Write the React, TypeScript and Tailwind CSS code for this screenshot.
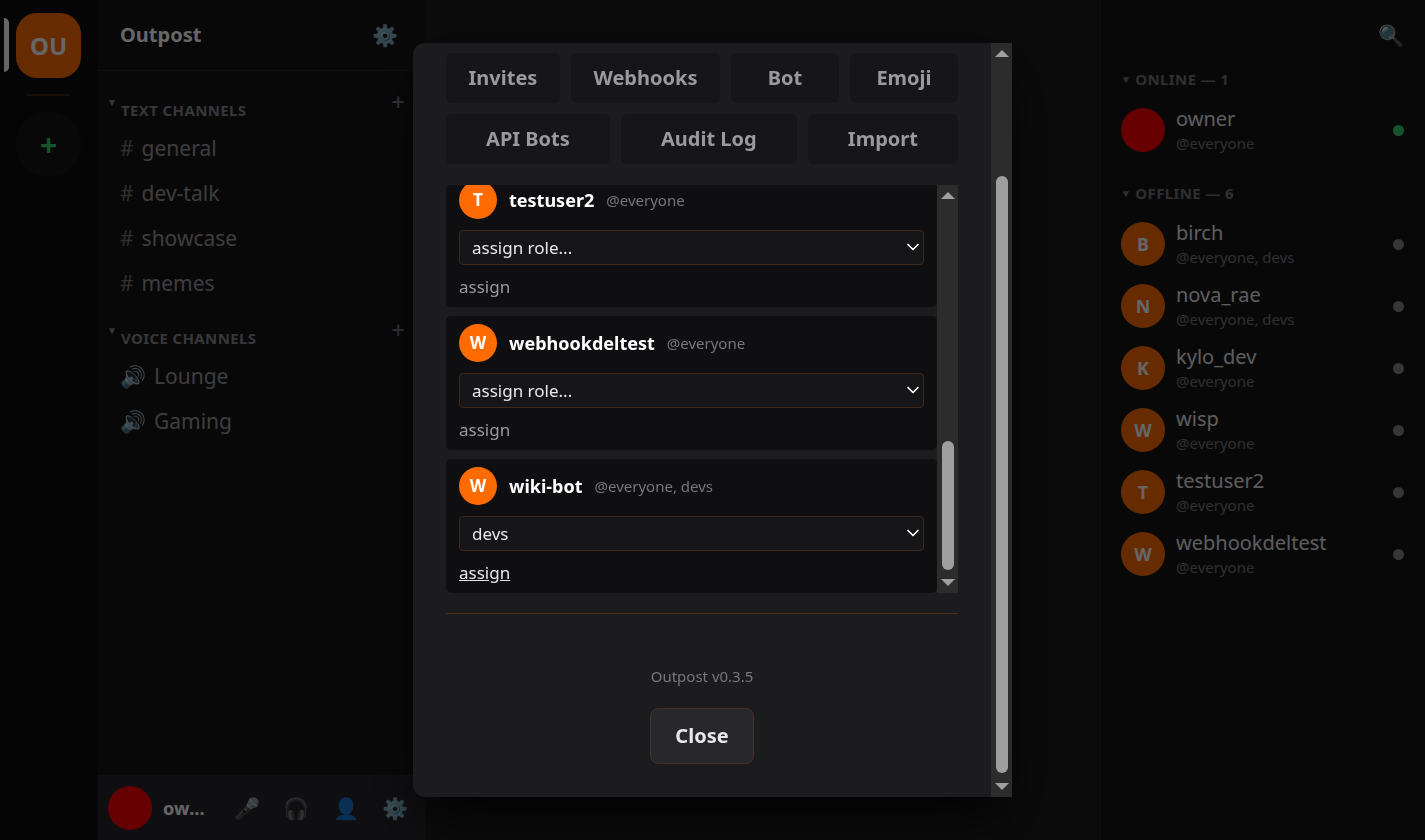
import { ChevronDown } from "lucide-react";

const textChannels = ["general", "dev-talk", "showcase", "memes"];
const voiceChannels = ["Lounge", "Gaming"];

const settingsTabs = ["Invites", "Webhooks", "Bot", "Emoji", "API Bots", "Audit Log", "Import"];

interface Member {
  name: string;
  roles: string;
  initial?: string;
  online?: boolean;
}

const onlineMembers: Member[] = [{ name: "owner", roles: "@everyone", online: true }];

const offlineMembers: Member[] = [
  { name: "birch", roles: "@everyone, devs", initial: "B" },
  { name: "nova_rae", roles: "@everyone, devs", initial: "N" },
  { name: "kylo_dev", roles: "@everyone", initial: "K" },
  { name: "wisp", roles: "@everyone", initial: "W" },
  { name: "testuser2", roles: "@everyone", initial: "T" },
  { name: "webhookdeltest", roles: "@everyone", initial: "W" },
];

const roleCards = [
  { name: "testuser2", roles: "@everyone", initial: "T", role: "" },
  { name: "webhookdeltest", roles: "@everyone", initial: "W", role: "" },
  { name: "wiki-bot", roles: "@everyone, devs", initial: "W", role: "devs", active: true },
];

function ServerRail() {
  return (
    <nav className="flex w-[98px] shrink-0 flex-col items-center border-r border-[#161618] bg-[#0e0e10] pt-[13px]">
      <div className="relative flex w-full justify-center">
        <span className="absolute left-1 top-[5px] h-[54px] w-[5px] rounded-r-md bg-white" />
        <button className="h-[65px] w-[65px] rounded-[21px] bg-[#ff6b00] text-2xl font-bold text-white">
          OU
        </button>
      </div>
      <div className="mt-4 h-[2px] w-[43px] bg-[#3a2418]" />
      <button
        aria-label="Add server"
        className="mt-4 h-[65px] w-[65px] rounded-full bg-[#161618] text-3xl font-bold text-[#3ecf76]"
      >
        +
      </button>
    </nav>
  );
}

function ChannelHeading({ label }: { label: string }) {
  return (
    <div className="flex h-12 items-center pl-[9px] pr-5 text-[#8a8a8e]">
      <span className="w-[14px] text-[10px]">▼</span>
      <h2 className="flex-1 pt-4 text-[15px] font-bold tracking-wide">{label}</h2>
      <button aria-label={`Add to ${label}`} className="text-2xl leading-6">
        +
      </button>
    </div>
  );
}

function UserPanel() {
  return (
    <div className="flex h-[65px] items-center bg-[#26262b] px-[10px]">
      <span className="h-11 w-11 shrink-0 rounded-full bg-[#ff0000]" />
      <span className="ml-[11px] w-[50px] truncate text-lg font-bold text-white">owner</span>
      <div className="flex flex-1 justify-between pl-[21px] pr-[7px] text-[21px] leading-6">
        <button aria-label="Mute">🎤</button>
        <button aria-label="Deafen">🎧</button>
        <button aria-label="Profile">👤</button>
        <button aria-label="Settings">⚙️</button>
      </div>
    </div>
  );
}

function ChannelSidebar() {
  return (
    <aside className="flex w-[327px] shrink-0 flex-col bg-[#161618]">
      <header className="flex h-[71px] items-center justify-between border-b border-[#26262b] pl-[22px] pr-[27px]">
        <h1 className="text-xl font-bold text-white">Outpost</h1>
        <button aria-label="Server settings" className="text-[21px] leading-6">
          ⚙️
        </button>
      </header>
      <div className="flex-1 pt-[7px] text-[21px] text-[#9a9a9e]">
        <ChannelHeading label="TEXT CHANNELS" />
        {textChannels.map((name) => (
          <a key={name} href="#" className="flex h-[45px] items-center gap-2 px-[22px]">
            <span className="text-[#77777b]">#</span>
            {name}
          </a>
        ))}
        <ChannelHeading label="VOICE CHANNELS" />
        {voiceChannels.map((name) => (
          <a key={name} href="#" className="flex h-[45px] items-center gap-2 px-[22px]">
            <span>🔊</span>
            {name}
          </a>
        ))}
      </div>
      <UserPanel />
    </aside>
  );
}

function MemberGroup({ label, members }: { label: string; members: Member[] }) {
  return (
    <section className="pt-5">
      <h2 className="flex h-8 items-start gap-1 text-[15px] font-bold leading-6 tracking-wide text-[#77777b]">
        <span className="text-[10px] leading-6">▼</span>
        {label}
      </h2>
      {members.map((m) => (
        <div key={m.name} className="flex h-[62px] items-center">
          <span
            className={`flex h-11 w-11 items-center justify-center rounded-full text-lg font-bold text-white ${
              m.initial ? "bg-[#ff6b00]" : "bg-[#ff0000]"
            }`}
          >
            {m.initial}
          </span>
          <div className="ml-[11px] min-w-0 flex-1">
            <div className="truncate text-xl leading-[26px] text-[#e8e8ea]">{m.name}</div>
            <div className="truncate text-[15px] leading-[22px] text-[#77777b]">{m.roles}</div>
          </div>
          <span className={`h-[11px] w-[11px] rounded-full ${m.online ? "bg-[#3ecf76]" : "bg-[#88888c]"}`} />
        </div>
      ))}
    </section>
  );
}

function MemberList() {
  return (
    <aside className="w-[325px] shrink-0 border-l border-[#26262b] bg-[#161618] pl-5 pr-[21px]">
      <div className="flex h-[47px] items-end justify-end">
        <button aria-label="Search" className="text-[21px] leading-6">
          🔍
        </button>
      </div>
      <MemberGroup label="ONLINE — 1" members={onlineMembers} />
      <MemberGroup label="OFFLINE — 6" members={offlineMembers} />
    </aside>
  );
}

function ScrollTrack({ children }: { children: React.ReactNode }) {
  return (
    <div className="flex w-[21px] shrink-0 flex-col items-center bg-[#2c2c2c] py-[7px]">
      <svg className="h-[7px] w-[14px] shrink-0 fill-[#a0a0a0]" viewBox="0 0 14 7">
        <path d="M0 7 7 0l7 7z" />
      </svg>
      {children}
      <svg className="h-[7px] w-[14px] shrink-0 fill-[#a0a0a0]" viewBox="0 0 14 7">
        <path d="M0 0 7 7l7-7z" />
      </svg>
    </div>
  );
}

function RoleCard({ card }: { card: (typeof roleCards)[number] }) {
  return (
    <div className="shrink-0 rounded-[5px] bg-[#0f0f11] px-[13px] py-2">
      <div className="flex items-center gap-3">
        <span className="flex h-[38px] w-[38px] items-center justify-center rounded-full bg-[#ff6b00] text-[17px] font-bold text-white">
          {card.initial}
        </span>
        <span className="text-lg font-bold text-white">{card.name}</span>
        <span className="text-[15px] text-[#77777b]">{card.roles}</span>
      </div>
      <div className="relative mt-[11px]">
        <select
          aria-label={`Role for ${card.name}`}
          defaultValue={card.role}
          className="block h-[35px] w-full appearance-none rounded border border-[#3d281c] bg-[#161618] px-3 text-[17px] text-[#e8e8ea]"
        >
          <option value="">assign role...</option>
          <option value="devs">devs</option>
        </select>
        <ChevronDown className="pointer-events-none absolute right-px top-[7px] h-5 w-5 text-white" strokeWidth={2} />
      </div>
      <button
        className={`mb-0.5 mt-[11px] block text-[17px] leading-[21px] ${
          card.active ? "text-[#e8e8ea] underline" : "text-[#9a9a9e]"
        }`}
      >
        assign
      </button>
    </div>
  );
}

function SettingsModal() {
  return (
    <div
      role="dialog"
      aria-label="Server settings"
      className="flex h-full w-full max-w-[599px] overflow-hidden rounded-l-xl bg-[#1c1c1e] shadow-2xl shadow-black"
    >
      <div className="flex min-w-0 flex-1 flex-col px-[33px] pt-[10px]">
        <div className="flex flex-wrap gap-[11px]">
          {settingsTabs.map((tab) => (
            <button
              key={tab}
              className="h-[50px] min-w-[108px] flex-auto rounded-md bg-[#161618] px-5 text-xl font-bold text-[#9a9a9e]"
            >
              {tab}
            </button>
          ))}
        </div>
        <div className="mt-[21px] flex h-[408px] shrink-0 overflow-hidden rounded-l-[5px]">
          <div className="flex flex-1 flex-col justify-end gap-[9px]">
            {roleCards.map((card) => (
              <RoleCard key={card.name} card={card} />
            ))}
          </div>
          <ScrollTrack>
            <div className="mb-[9px] mt-auto h-[129px] w-3 rounded-full bg-[#9f9f9f]" />
          </ScrollTrack>
        </div>
        <div className="mt-5 flex flex-col items-center border-t border-[#45301f] pt-[50px]">
          <p className="text-[15px] leading-6 text-[#77777b]">Outpost v0.3.5</p>
          <button className="mt-5 h-14 rounded-lg border border-[#46302a] bg-[#28282c] px-6 text-xl font-bold text-[#e8e8ea]">
            Close
          </button>
        </div>
      </div>
      <ScrollTrack>
        <div className="mb-[10px] mt-[119px] w-3 flex-1 rounded-full bg-[#9f9f9f]" />
      </ScrollTrack>
    </div>
  );
}

export default function App() {
  return (
    <div className="relative flex h-screen bg-[#1c1c1e] font-['Noto_Sans',sans-serif]">
      <ServerRail />
      <ChannelSidebar />
      <main className="flex-1" />
      <MemberList />
      <div className="fixed inset-0 flex items-center justify-center bg-black/60 py-[43px]">
        <SettingsModal />
      </div>
    </div>
  );
}
